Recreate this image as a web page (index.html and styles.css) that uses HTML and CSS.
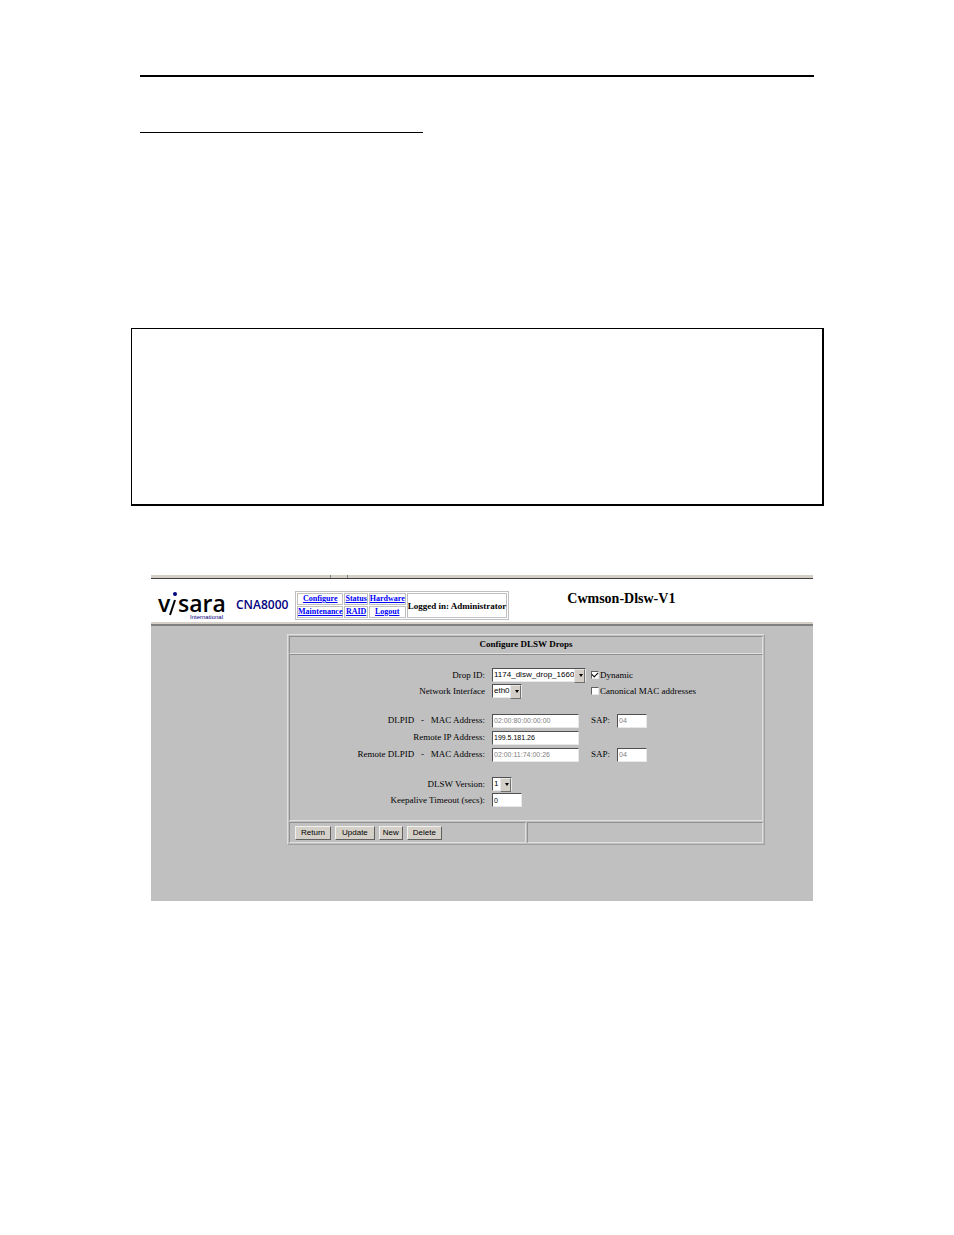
FILE: index.html
```
<!DOCTYPE html>
<html lang="en">
  <head>
    <meta charset="UTF-8" />
    <meta name="viewport" content="width=device-width, initial-scale=1.0" />
    <title>Configure DLSW Drops</title>
    <link rel="stylesheet" href="styles.css">
  </head>
  <body>
    <hr class="page-rule" />
    <hr class="heading-rule" />
    <div class="note"></div>

    <main class="console">
      <div class="toolbar-edge"><span></span></div>
      <header class="banner">
        <svg class="logo" width="70" height="38" viewBox="0 0 70 38" role="img" aria-label="Visara International">
          <text class="logo-name" x="0" y="28">v</text>
          <path class="logo-slash" d="M12 31 L17 16" />
          <circle class="logo-dot" cx="17" cy="10" r="2" />
          <text class="logo-name" x="20" y="28">sara</text>
          <text class="logo-sub" x="32" y="35">International</text>
        </svg>
        <span class="model">CNA8000</span>
        <table class="menu">
          <tr>
            <td><a href="#">Configure</a></td>
            <td><a href="#">Status</a></td>
            <td><a href="#">Hardware</a></td>
            <td class="login" rowspan="2">Logged in: Administrator</td>
          </tr>
          <tr>
            <td><a href="#">Maintenance</a></td>
            <td><a href="#">RAID</a></td>
            <td><a href="#">Logout</a></td>
          </tr>
        </table>
        <h1>Cwmson-Dlsw-V1</h1>
      </header>

      <form class="panel">
        <h2 class="cell">Configure DLSW Drops</h2>

        <div class="cell fields">
          <label for="drop">Drop ID:</label>
          <span class="select drop">
            <select id="drop"><option>1174_dlsw_drop_1660</option></select>
          </span>
          <span class="extra">
            <input type="checkbox" id="dynamic" checked />
            <label for="dynamic">Dynamic</label>
          </span>

          <label for="iface">Network Interface</label>
          <span class="select iface">
            <select id="iface"><option>eth0</option></select>
          </span>
          <span class="extra">
            <input type="checkbox" id="canonical" />
            <label for="canonical">Canonical MAC addresses</label>
          </span>

          <label class="group" for="mac">DLPID &nbsp; - &nbsp; MAC Address:</label>
          <input class="group" type="text" id="mac" value="02:00:80:00:00:00" disabled />
          <span class="extra group">
            <label for="sap">SAP:</label>
            <input class="short" type="text" id="sap" value="04" disabled />
          </span>

          <label for="remoteIp">Remote IP Address:</label>
          <input type="text" id="remoteIp" value="199.5.181.26" />

          <label for="remoteMac">Remote DLPID &nbsp; - &nbsp; MAC Address:</label>
          <input type="text" id="remoteMac" value="02:00:11:74:00:26" disabled />
          <span class="extra">
            <label for="remoteSap">SAP:</label>
            <input class="short" type="text" id="remoteSap" value="04" disabled />
          </span>

          <label class="group" for="version">DLSW Version:</label>
          <span class="select version group">
            <select id="version"><option>1</option></select>
          </span>

          <label for="keepalive">Keepalive Timeout (secs):</label>
          <input class="short" type="text" id="keepalive" value="0" />
        </div>

        <div class="footer">
          <div class="cell buttons">
            <button type="button">Return</button>
            <button class="wide" type="button">Update</button>
            <button class="narrow" type="button">New</button>
            <button type="button">Delete</button>
          </div>
          <div class="cell"></div>
        </div>
      </form>
    </main>
  </body>
</html>
```
FILE: styles.css
```
* {
  box-sizing: border-box;
}
body {
  margin: 0;
  padding: 75px 130px 40px 131px;
  background: #fff;
  color: #000;
  font-family: "Liberation Serif", "Times New Roman", serif;
  font-size: 9px;
  line-height: 11px;
}
hr {
  border: 0;
  background: #000;
}
.page-rule {
  height: 2px;
  margin: 0 10px 0 9px;
}
.heading-rule {
  width: 283px;
  height: 1px;
  margin: 55px 9px 0;
}
.note {
  height: 178px;
  margin-top: 195px;
  border: solid #000;
  border-width: 1px 2px 2px 1px;
}

/* console */
.console {
  min-height: 326px;
  margin: 69px 11px 0 20px;
  background: #c0c0c0;
}
.toolbar-edge {
  height: 4px;
  background: #d4d0c8;
  border-bottom: 1px solid #404040;
}
.toolbar-edge span {
  display: block;
  width: 18px;
  height: 3px;
  margin-left: 179px;
  border: solid #808080;
  border-width: 0 1px;
}
.banner {
  display: flex;
  align-items: flex-start;
  height: 47px;
  padding-left: 7px;
  background: #fff;
  border-bottom: 2px solid #808080;
  box-shadow: inset 0 -2px #d4d0c8;
}
.logo {
  flex: none;
  margin-top: 5px;
}
.logo-name {
  font-family: "Open Sans", sans-serif;
  font-size: 23px;
  font-weight: 600;
}
.logo-slash {
  stroke: #000;
  stroke-width: 2;
}
.logo-dot {
  fill: #000080;
}
.logo-sub {
  fill: #000080;
  font-family: "Liberation Sans", Arial, sans-serif;
  font-size: 6px;
}
.model {
  width: 52px;
  margin: 19px 0 0 8px;
  color: #000080;
  font: 600 12px/14px "Open Sans", sans-serif;
}
.menu {
  margin: 12px 0 0 7px;
  border: 1px solid #c0c0c0;
  border-spacing: 1px;
  font-size: 8px;
  font-weight: bold;
  line-height: 10px;
  text-align: center;
  white-space: nowrap;
}
.menu td {
  padding: 0;
  border: 1px solid #c0c0c0;
}
.menu .login {
  font-size: 9px;
}
.menu a {
  color: #0000ff;
}
h1 {
  margin: 12px 0 0 58px;
  font-size: 14px;
  line-height: 16px;
}

/* form panel */
.panel {
  width: 478px;
  max-width: 100%;
  margin: 8px auto 0 136px;
  padding: 1px;
  border: 1px solid;
  border-color: #e0e0e0 #a0a0a0 #a0a0a0 #e0e0e0;
}
.cell {
  border: 1px solid;
  border-color: #909090 #e0e0e0 #e0e0e0 #909090;
}
h2 {
  margin: 0;
  padding: 2px 0 3px;
  font-size: 9px;
  line-height: 11px;
  text-align: center;
}
.fields {
  display: grid;
  grid-template-columns: 195px 92px 1fr;
  grid-template-rows: 16px 16px 30px 17px 17px 29px 16px;
  column-gap: 7px;
  align-items: center;
  padding: 12px 0;
}
.fields > label {
  grid-column: 1;
  text-align: right;
}
.fields .group {
  margin-top: 13px;
}
.extra {
  display: flex;
  align-items: center;
}
.fields > input,
.extra input[type="text"] {
  width: 87px;
  height: 14px;
}
input[type="text"] {
  padding: 0 1px;
  background: #fff;
  border: 1px solid;
  border-color: #505050 #e8e8e8 #e8e8e8 #505050;
  font: 7px/11px "Liberation Sans", Arial, sans-serif;
}
input[type="text"]:disabled {
  color: #808080;
}
.fields input.short {
  width: 30px;
}
.extra input.short {
  margin-left: 7px;
}
input[type="checkbox"] {
  appearance: none;
  display: grid;
  place-items: center;
  width: 8px;
  height: 8px;
  margin: 0 1px 0 0;
  background: #fff;
  border: 1px solid;
  border-color: #606060 #e8e8e8 #e8e8e8 #606060;
}
input[type="checkbox"]:checked::before {
  content: "";
  width: 5px;
  height: 3px;
  margin-top: -2px;
  border: solid #000;
  border-width: 0 0 1px 1px;
  transform: rotate(-45deg);
}

/* drop-downs with the raised arrow box */
.select {
  position: relative;
  height: 14px;
}
.select select {
  appearance: none;
  display: block;
  width: 100%;
  height: 14px;
  padding: 0 0 0 1px;
  background: #fff;
  border: 1px solid;
  border-color: #505050 #e8e8e8 #e8e8e8 #505050;
  border-radius: 0;
  color: #000;
  font: 8px/10px "Liberation Sans", Arial, sans-serif;
}
.select::before {
  content: "";
  position: absolute;
  top: 1px;
  right: 1px;
  width: 9px;
  height: 12px;
  background: #d4d0c8;
  border: 1px solid;
  border-color: #e8e8e8 #707070 #707070 #e8e8e8;
  pointer-events: none;
}
.select::after {
  content: "";
  position: absolute;
  top: 6px;
  right: 3px;
  border: solid transparent;
  border-width: 3px 2px 0;
  border-top-color: #000;
  pointer-events: none;
}
.drop {
  width: 94px;
}
.iface {
  width: 30px;
}
.version {
  width: 20px;
}

.footer {
  display: grid;
  grid-template-columns: 1fr 1fr;
  gap: 1px;
  margin-top: 1px;
}
.buttons {
  display: flex;
  gap: 4px;
  padding: 3px 5px 2px;
}
button {
  height: 14px;
  padding: 0 5px;
  background: #d4d0c8;
  border: 1px solid;
  border-color: #f0f0f0 #606060 #606060 #f0f0f0;
  color: #000;
  font: 8px/10px "Liberation Sans", Arial, sans-serif;
}
button.wide {
  padding: 0 6px;
}
button.narrow {
  padding: 0 3px;
}
```
